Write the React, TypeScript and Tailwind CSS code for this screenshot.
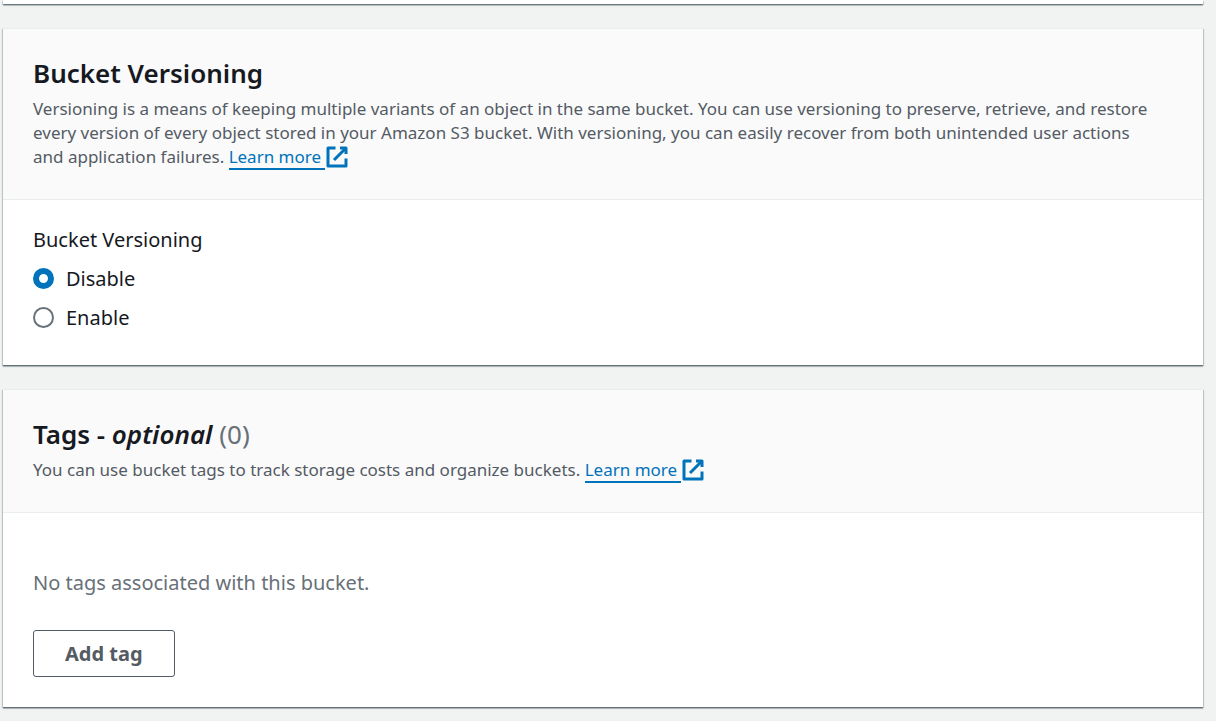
import { useState } from "react";
import type { ReactNode } from "react";

const cardShadow =
  "shadow-[0_1px_1px_0_rgba(0,28,36,0.3),0_2px_1px_0_rgba(0,28,36,0.2),1px_1px_1px_0_rgba(0,28,36,0.15),-1px_1px_1px_0_rgba(0,28,36,0.15)]";

function ExternalIcon() {
  return (
    <svg
      className="inline-block size-6 align-[-6px]"
      viewBox="0 0 16 16"
      fill="none"
      stroke="currentColor"
      strokeWidth="2"
      strokeLinejoin="round"
      aria-hidden="true"
    >
      <path d="M10 2h4v4" />
      <path d="M6 10l8-8" />
      <path d="M14 9.05V14H2V2h5" />
    </svg>
  );
}

function LearnMore() {
  return (
    <a href="#learn-more" className="whitespace-nowrap text-[#0073bb]">
      <span className="border-b-2 border-[#0073bb] pr-1">Learn more</span>
      <ExternalIcon />
    </a>
  );
}

function Card({ title, description, children }: { title: ReactNode; description: ReactNode; children: ReactNode }) {
  return (
    <section className={`bg-white ${cardShadow}`}>
      <header className="border-y border-[#eaeded] bg-[#fafafa] pt-[26px] pr-[42px] pb-[30px] pl-[30px]">
        <h2 className="text-[26px] leading-9 font-semibold text-[#16191f]">{title}</h2>
        <p className="mt-1.5 text-[17px] leading-6 text-[#545b64]">{description}</p>
      </header>
      {children}
    </section>
  );
}

export default function App() {
  const [versioning, setVersioning] = useState("Disable");

  return (
    <main className="flex min-h-screen flex-col gap-6 bg-[#f1f3f3] pr-[13px] pb-3 pl-[3px] font-['Noto_Sans','Open_Sans',sans-serif]">
      <div className={`h-1 bg-white ${cardShadow}`} />

      <Card
        title="Bucket Versioning"
        description={
          <>
            Versioning is a means of keeping multiple variants of an object in the same bucket. You can use versioning
            to preserve, retrieve, and restore every version of every object stored in your Amazon S3 bucket. With
            versioning, you can easily recover from both unintended user actions and application failures.{" "}
            <LearnMore />
          </>
        }
      >
        <fieldset className="px-[30px] pt-[23px] pb-[31px] text-xl leading-[33px] text-[#16191f]">
          <legend className="float-left w-full">Bucket Versioning</legend>
          <div className="clear-both flex flex-col items-start gap-1.5 pt-1.5">
            {["Disable", "Enable"].map((option) => (
              <label key={option} className="flex items-center gap-3">
                <input
                  type="radio"
                  name="versioning"
                  value={option}
                  checked={versioning === option}
                  onChange={() => setVersioning(option)}
                  className="size-[21px] appearance-none rounded-full border-2 border-[#687078] bg-white checked:border-[6px] checked:border-[#0073bb]"
                />
                {option}
              </label>
            ))}
          </div>
        </fieldset>
      </Card>

      <Card
        title={
          <>
            Tags - <em>optional</em> <span className="font-normal text-[#687078]">(0)</span>
          </>
        }
        description={
          <>
            You can use bucket tags to track storage costs and organize buckets. <LearnMore />
          </>
        }
      >
        <div className="px-[30px] pt-[53px] pb-[30px] text-xl leading-[33px]">
          <p className="text-[#687078]">No tags associated with this bucket.</p>
          <button
            type="button"
            className="mt-[31px] h-[47px] rounded-[3px] border border-[#545b64] bg-white px-[31px] font-bold text-[#545b64]"
          >
            Add tag
          </button>
        </div>
      </Card>
    </main>
  );
}
